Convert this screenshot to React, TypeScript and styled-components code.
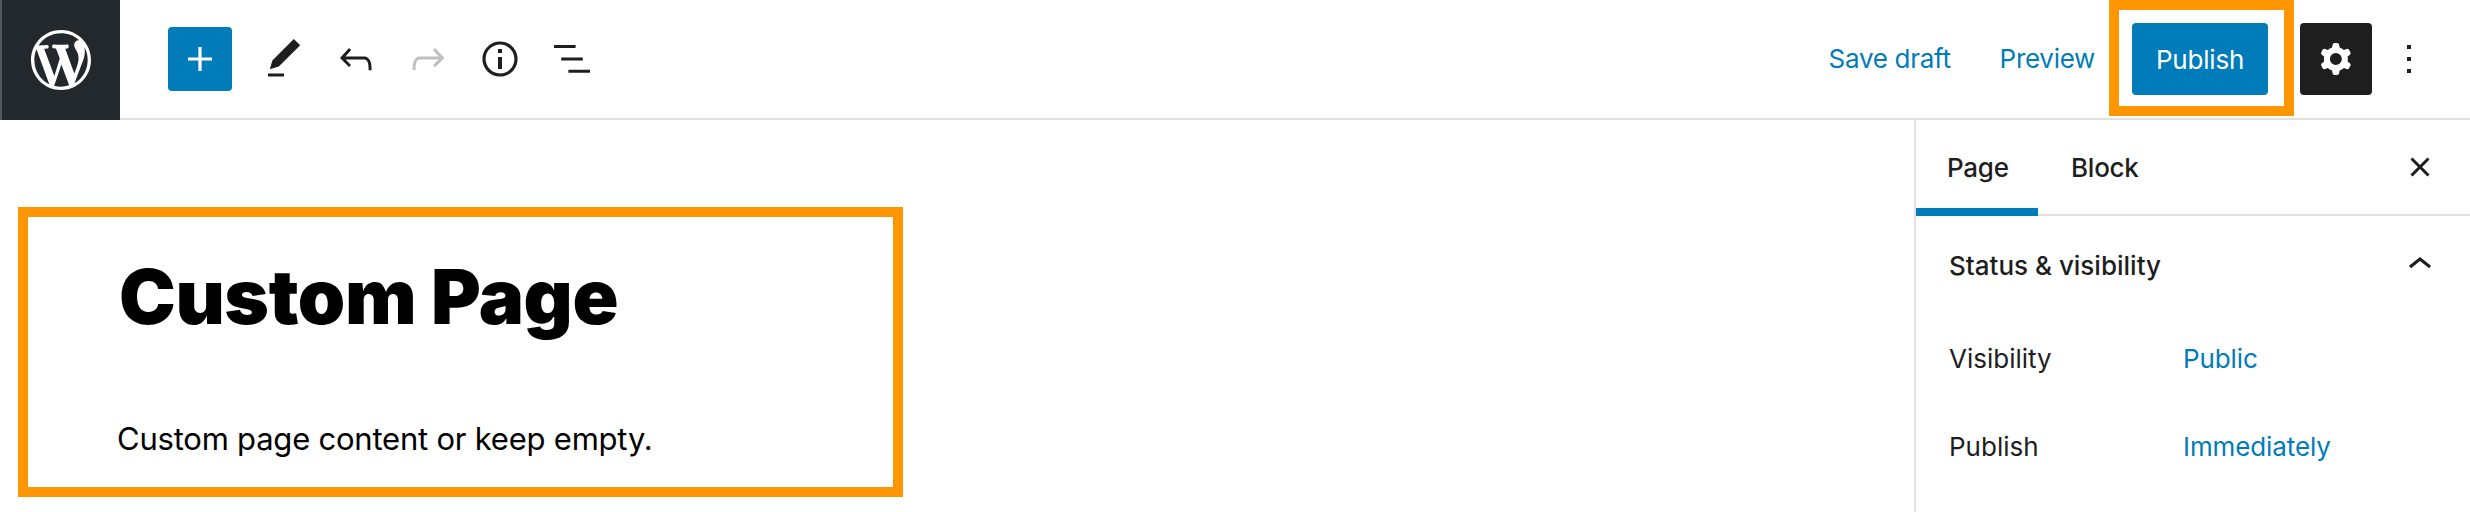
import React from 'react';
import styled, { createGlobalStyle } from 'styled-components';

const GlobalStyle = createGlobalStyle`
  html, body {
    margin: 0;
    padding: 0;
    background: #fff;
  }
  body {
    font-family: Inter, "Noto Sans", sans-serif;
    color: #1e1e1e;
  }
`;

const Root = styled.div`
  position: relative;
  display: flex;
  flex-direction: column;
  width: 2470px;
  height: 512px;
  overflow: hidden;
`;

const Header = styled.header`
  display: flex;
  align-items: center;
  height: 118px;
  border-bottom: 2px solid #e0e0e0;
  flex-shrink: 0;
`;

const Logo = styled.div`
  display: flex;
  align-items: center;
  justify-content: center;
  width: 120px;
  height: 120px;
  margin-bottom: -2px;
  box-sizing: border-box;
  border-left: 2px solid #50575e;
  background: #23282d;
  color: #fff;
  flex-shrink: 0;
`;

const Tools = styled.div`
  display: flex;
  align-items: center;
  padding-left: 48px;
  gap: 16px;
`;

const ToolGroup = styled.div`
  display: flex;
  align-items: center;
`;

const AddButton = styled.div`
  display: flex;
  align-items: center;
  justify-content: center;
  width: 64px;
  height: 64px;
  border-radius: 4px;
  background: #007cba;
  color: #fff;
`;

const IconButton = styled.div<{ $disabled?: boolean }>`
  display: flex;
  align-items: center;
  justify-content: center;
  width: 72px;
  height: 72px;
  color: ${({ $disabled }) => ($disabled ? '#c0c0c0' : '#1e1e1e')};
`;

const Actions = styled.div`
  display: flex;
  align-items: center;
  margin-left: auto;
  padding-right: 37px;
`;

const LinkButton = styled.div<{ $gap: number }>`
  font-size: 26px;
  line-height: 36px;
  letter-spacing: -0.3px;
  color: #007cba;
  margin-right: ${({ $gap }) => $gap}px;
  white-space: nowrap;
`;

const PublishButton = styled.div`
  display: flex;
  align-items: center;
  justify-content: center;
  width: 136px;
  height: 72px;
  border-radius: 4px;
  background: #007cba;
  color: #fff;
  font-size: 26px;
  letter-spacing: -0.2px;
  margin-right: 32px;
`;

const SettingsButton = styled.div`
  display: flex;
  align-items: center;
  justify-content: center;
  width: 72px;
  height: 72px;
  border-radius: 4px;
  background: #1e1e1e;
  color: #fff;
`;

const MoreButton = styled.div`
  display: flex;
  align-items: center;
  justify-content: center;
  width: 48px;
  height: 72px;
  margin-left: 13px;
  color: #1e1e1e;
`;

const PublishHighlight = styled.div`
  position: absolute;
  left: 2109px;
  top: 0;
  width: 185px;
  height: 116px;
  box-sizing: border-box;
  border: 10px solid #ff9500;
  pointer-events: none;
`;

const Body = styled.div`
  display: flex;
  flex: 1;
  min-height: 0;
`;

const Main = styled.main`
  flex: 1;
  padding: 87px 0 0 18px;
`;

const ContentHighlight = styled.section`
  box-sizing: border-box;
  width: 885px;
  height: 290px;
  border: 10px solid #ff9500;
  padding: 33px 0 0 90px;
  color: #000;
`;

const Title = styled.h1`
  margin: 0 0 0 1px;
  font-size: 76px;
  line-height: 92px;
  font-weight: 900;
  letter-spacing: -0.4px;
`;

const Paragraph = styled.p`
  margin: 77px 0 0 -1px;
  font-size: 31px;
  line-height: 40px;
  letter-spacing: -0.22px;
`;

const Sidebar = styled.aside`
  width: 556px;
  box-sizing: border-box;
  border-left: 2px solid #e0e0e0;
  flex-shrink: 0;
`;

const TabBar = styled.div`
  display: flex;
  align-items: stretch;
  height: 94px;
  border-bottom: 2px solid #e0e0e0;
`;

const Tab = styled.div<{ $active?: boolean }>`
  display: flex;
  align-items: center;
  box-sizing: border-box;
  width: ${({ $active }) => ($active ? '122px' : 'auto')};
  padding: ${({ $active }) => ($active ? '6px 0 0 31px' : '6px 32px 0 33px')};
  margin-bottom: -2px;
  font-size: 26px;
  font-weight: 500;
  letter-spacing: -0.25px;
  border-bottom: 8px solid ${({ $active }) => ($active ? '#007cba' : 'transparent')};
`;

const CloseButton = styled.div`
  display: flex;
  align-items: center;
  margin-left: auto;
  margin-right: 26px;
`;

const Panel = styled.div`
  padding: 0 26px 0 33px;
`;

const PanelTitle = styled.div`
  display: flex;
  align-items: center;
  justify-content: space-between;
  height: 98px;
  font-size: 26px;
  font-weight: 500;
`;

const PanelRow = styled.div`
  display: grid;
  grid-template-columns: 234px 1fr;
  align-items: center;
  height: 88px;
  font-size: 26px;
`;

const PanelValue = styled.span`
  color: #007cba;
  letter-spacing: -0.1px;
`;

const Icon = ({ d, size = 48, box = 24 }: { d: string; size?: number; box?: number }) => (
  <svg width={size} height={size} viewBox={`0 0 ${box} ${box}`} fill='currentColor' fillRule='evenodd'>
    <path d={d} />
  </svg>
);

const paths = {
  wordpress:
    'M20 10c0-5.51-4.49-10-10-10C4.48 0 0 4.49 0 10c0 5.52 4.48 10 10 10 5.51 0 10-4.48 10-10zM7.78 15.37L4.37 6.22c.55-.02 1.17-.08 1.17-.08.5-.06.44-1.13-.06-1.11 0 0-1.45.11-2.37.11-.18 0-.37 0-.58-.01C4.12 2.69 6.87 1.11 10 1.11c2.33 0 4.45.87 6.05 2.34-.68-.11-1.65.39-1.65 1.58 0 .74.45 1.36.9 2.1.35.61.55 1.36.55 2.46 0 1.49-1.4 5-1.4 5l-3.03-8.37c.54-.02.82-.17.82-.17.5-.05.44-1.25-.06-1.22 0 0-1.44.12-2.38.12-.87 0-2.33-.12-2.33-.12-.5-.03-.56 1.2-.06 1.22l.92.08 1.26 3.41zM17.41 10c.24-.64.74-1.87.43-4.25.7 1.29 1.05 2.71 1.05 4.25 0 3.29-1.73 6.24-4.4 7.78.97-2.59 1.94-5.2 2.92-7.78zM6.1 18.09C3.12 16.65 1.11 13.53 1.11 10c0-1.3.23-2.48.72-3.59C3.25 10.3 4.67 14.2 6.1 18.09zm4.03-6.63l2.58 6.98c-.86.29-1.76.45-2.71.45-.79 0-1.57-.11-2.29-.33.81-2.38 1.62-4.74 2.42-7.1z',
  plus: 'M18 11.2h-5.2V6h-1.6v5.2H6v1.6h5.2V18h1.6v-5.2H18z',
  edit: 'M20.1 5.1L16.9 2 6.2 12.7l-1.3 4.4 4.5-1.3L20.1 5.1zM4 20.8h8v-1.5H4v1.5z',
  undo: 'M18.3 11.7c-.6-.6-1.4-.9-2.3-.9H6.7l2.9-3.3-1.1-1-4.5 5L8.5 16l1-1-2.7-2.7H16c.5 0 .9.2 1.3.5 1 1 1 3.4 1 4.5v.3h1.5v-.2c0-1.5 0-4.3-1.5-5.7z',
  redo: 'M15.6 6.5l-1.1 1 2.9 3.3H8c-.9 0-1.7.3-2.3.9-1.4 1.5-1.4 4.2-1.4 5.6v.2h1.5v-.3c0-1.1 0-3.5 1-4.5.3-.3.7-.5 1.3-.5h9.2L14.5 15l1.1 1.1 4.6-4.6-4.6-5z',
  info: 'M12 3.2c-4.8 0-8.8 3.9-8.8 8.8 0 4.8 3.9 8.8 8.8 8.8 4.8 0 8.8-3.9 8.8-8.8 0-4.8-4-8.8-8.8-8.8zm0 16c-4 0-7.2-3.3-7.2-7.2C4.8 8 8 4.8 12 4.8s7.2 3.3 7.2 7.2c0 4-3.2 7.2-7.2 7.2zM11 17h2v-6h-2v6zm0-8h2V7h-2v2z',
  list: 'M3 5h10.8v1.5H3zM6.6 11.2h10.8v1.5H6.6zM10.2 17.4H21v1.5H10.2z',
  cog: 'M10.289 4.836A1 1 0 0111.275 4h1.306a1 1 0 01.987.836l.244 1.466c.787.26 1.503.679 2.108 1.218l1.393-.522a1 1 0 011.216.437l.653 1.13a1 1 0 01-.23 1.273l-1.148.944a6.025 6.025 0 010 2.435l1.149.946a1 1 0 01.23 1.272l-.653 1.13a1 1 0 01-1.216.437l-1.394-.522c-.605.54-1.32.958-2.108 1.218l-.244 1.466a1 1 0 01-.987.836h-1.306a1 1 0 01-.986-.836l-.244-1.466a5.995 5.995 0 01-2.108-1.218l-1.394.522a1 1 0 01-1.217-.436l-.653-1.131a1 1 0 01.23-1.272l1.149-.946a6.026 6.026 0 010-2.435l-1.148-.944a1 1 0 01-.23-1.272l.653-1.131a1 1 0 011.217-.437l1.393.522a5.994 5.994 0 012.108-1.218l.244-1.466zM14.929 12a3 3 0 11-6 0 3 3 0 016 0z',
  more: 'M13 19h-2v-2h2v2zm0-6h-2v-2h2v2zm0-6h-2V5h2v2z',
  close:
    'M12 13.06l3.712 3.713 1.061-1.06L13.061 12l3.712-3.712-1.06-1.06L12 10.938 8.288 7.227l-1.061 1.06L10.939 12l-3.712 3.712 1.06 1.061L12 13.061z',
  chevronUp: 'M6.5 12.4L12 8l5.5 4.4-.9 1.2L12 10l-4.5 3.6-1-1.2z',
};

export default function App() {
  return (
    <Root>
      <GlobalStyle />
      <Header>
        <Logo>
          <Icon d={paths.wordpress} size={60} box={20} />
        </Logo>
        <Tools>
          <AddButton>
            <Icon d={paths.plus} />
          </AddButton>
          <ToolGroup>
            <IconButton>
              <Icon d={paths.edit} />
            </IconButton>
            <IconButton>
              <Icon d={paths.undo} />
            </IconButton>
            <IconButton $disabled>
              <Icon d={paths.redo} />
            </IconButton>
            <IconButton>
              <Icon d={paths.info} />
            </IconButton>
            <IconButton>
              <Icon d={paths.list} />
            </IconButton>
          </ToolGroup>
        </Tools>
        <Actions>
          <LinkButton $gap={49}>Save draft</LinkButton>
          <LinkButton $gap={37}>Preview</LinkButton>
          <PublishButton>Publish</PublishButton>
          <SettingsButton>
            <Icon d={paths.cog} />
          </SettingsButton>
          <MoreButton>
            <Icon d={paths.more} />
          </MoreButton>
        </Actions>
      </Header>
      <PublishHighlight />
      <Body>
        <Main>
          <ContentHighlight>
            <Title>Custom Page</Title>
            <Paragraph>Custom page content or keep empty.</Paragraph>
          </ContentHighlight>
        </Main>
        <Sidebar>
          <TabBar>
            <Tab $active>Page</Tab>
            <Tab>Block</Tab>
            <CloseButton>
              <Icon d={paths.close} />
            </CloseButton>
          </TabBar>
          <Panel>
            <PanelTitle>
              Status &amp; visibility
              <Icon d={paths.chevronUp} />
            </PanelTitle>
            <PanelRow>
              <span>Visibility</span>
              <PanelValue>Public</PanelValue>
            </PanelRow>
            <PanelRow>
              <span>Publish</span>
              <PanelValue>Immediately</PanelValue>
            </PanelRow>
          </Panel>
        </Sidebar>
      </Body>
    </Root>
  );
}
